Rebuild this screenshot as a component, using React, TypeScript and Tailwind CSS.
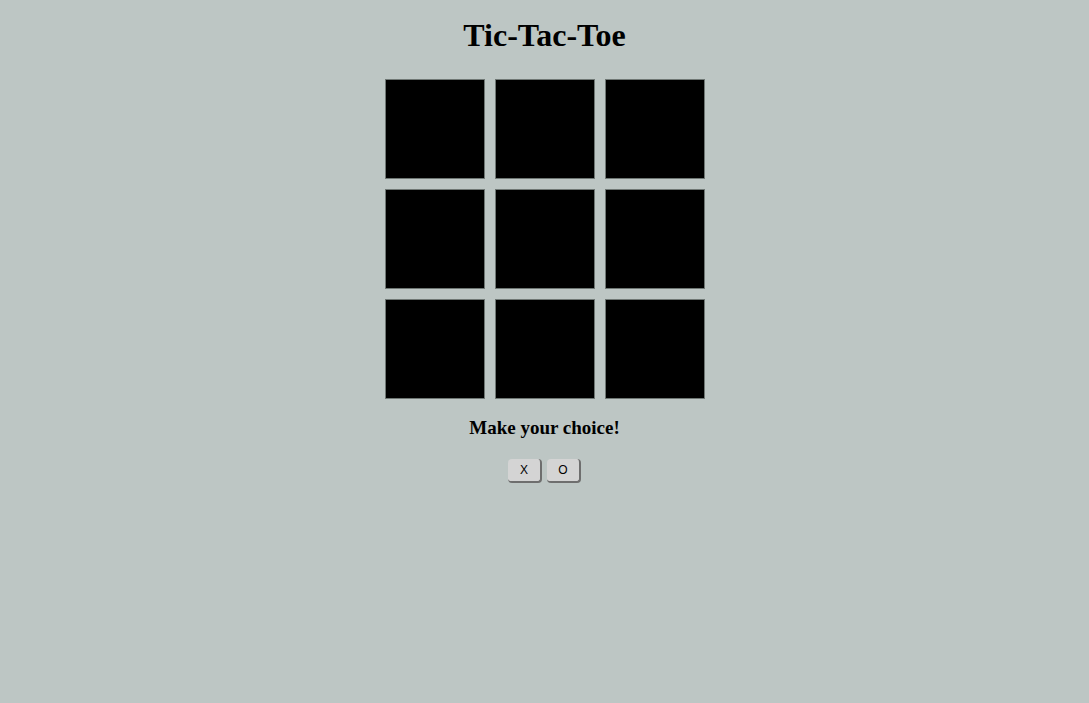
import React from "react";

export default function App() {
  const cells = Array.from({ length: 9 });
  return (
    <div className="min-h-[703px] w-full bg-[#bdc6c4] flex flex-col items-center" style={{ fontFamily: '"Liberation Serif", serif' }}>
      <h1 className="mt-[17px] text-[32px] leading-[37px] font-bold text-black">Tic-Tac-Toe</h1>
      <div className="mt-[25px] grid grid-cols-[100px_100px_100px] gap-[10px]">
        {cells.map((_, i) => (
          <div key={i} className="w-[100px] h-[100px] bg-black border border-[#6f7774]" />
        ))}
      </div>
      <h3 className="mt-[18px] text-[19px] leading-[22px] font-bold text-black">Make your choice!</h3>
      <div className="mt-[20px] flex gap-[5px]" style={{ fontFamily: '"Liberation Sans", Arial, sans-serif' }}>
        <button className="w-[34px] h-[24px] bg-[#d4d4d4] rounded-[4px] border-r-2 border-b-2 border-[#6e6e6e] text-[12px] text-black flex items-center justify-center">X</button>
        <button className="w-[34px] h-[24px] bg-[#d4d4d4] rounded-[4px] border-r-2 border-b-2 border-[#6e6e6e] text-[12px] text-black flex items-center justify-center">O</button>
      </div>
    </div>
  );
}
